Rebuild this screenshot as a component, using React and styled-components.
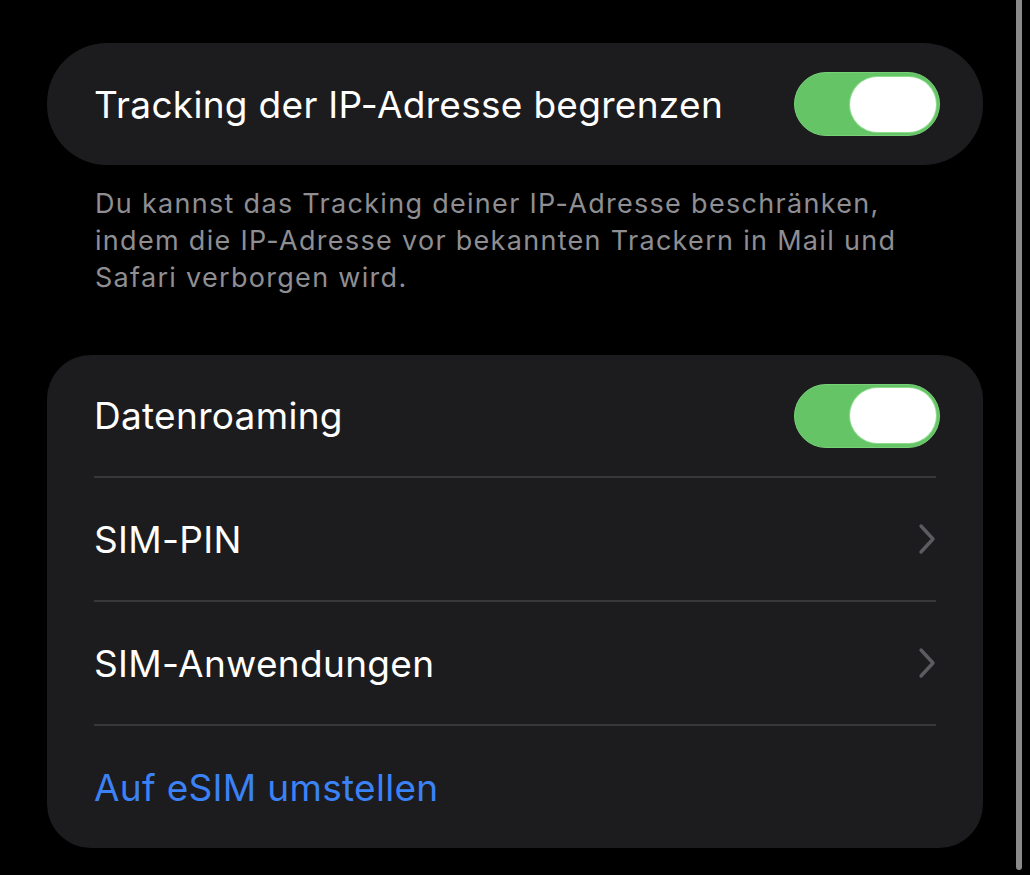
import React from 'react';
import styled, { createGlobalStyle } from 'styled-components';

const GlobalStyle = createGlobalStyle`
  html, body {
    margin: 0;
    padding: 0;
    background: #000;
  }
  body {
    font-family: Inter, "Noto Sans", "Liberation Sans", sans-serif;
    -webkit-font-smoothing: antialiased;
  }
`;

const Page = styled.div`
  display: flex;
  width: 1030px;
  height: 875px;
  background: #000;
  overflow: hidden;
`;

const Content = styled.div`
  display: flex;
  flex-direction: column;
  width: 936px;
  margin-left: 47px;
  padding-top: 43px;
`;

const ScrollBar = styled.div`
  width: 6px;
  height: 870px;
  margin-left: 33px;
  background: #8a8a8a;
  border-radius: 0 0 3px 3px;
`;

const Card = styled.div`
  background: #1c1c1e;
  border-radius: ${(p) => p.$radius}px;
  overflow: hidden;
`;

const Row = styled.div`
  display: flex;
  align-items: center;
  justify-content: space-between;
  height: ${(p) => p.$height || 124}px;
  margin: 0 47px;
  box-sizing: border-box;
  border-top: ${(p) => (p.$divider ? '2px solid #38383a' : 'none')};
`;

const Label = styled.span`
  font-size: 37px;
  letter-spacing: 0.3px;
  color: ${(p) => (p.$link ? '#3b82f6' : '#ffffff')};
`;

const Footnote = styled.p`
  margin: 0;
  padding: 20px 20px 0 48px;
  height: 190px;
  box-sizing: border-box;
  font-size: 27px;
  line-height: 37px;
  letter-spacing: 1.3px;
  color: #8e8e93;
`;

const Track = styled.div`
  display: flex;
  align-items: center;
  justify-content: flex-end;
  width: 146px;
  height: 64px;
  margin-right: -4px;
  padding: 0 3px;
  box-sizing: border-box;
  border-radius: 32px;
  background: #65c466;
  border: 1px solid #78d179;
`;

const Knob = styled.div`
  width: 86px;
  height: 55px;
  border-radius: 28px;
  background: #fff;
  box-shadow: 0 0 0 1px #8fdc8f;
`;

const Chevron = styled.svg`
  width: 24px;
  height: 34px;
`;

const Toggle = () => (
  <Track>
    <Knob />
  </Track>
);

const Arrow = () => (
  <Chevron viewBox="0 0 24 34">
    <path
      d="M9 4 L21 17 L9 30"
      fill="none"
      stroke="#5b5b60"
      strokeWidth="3.4"
      strokeLinecap="round"
      strokeLinejoin="round"
    />
  </Chevron>
);

export default function App() {
  return (
    <Page>
      <GlobalStyle />
      <Content>
        <Card $radius={60}>
          <Row $height={122}>
            <Label>Tracking der IP-Adresse begrenzen</Label>
            <Toggle />
          </Row>
        </Card>
        <Footnote>
          Du kannst das Tracking deiner IP-Adresse beschränken,
          <br />
          indem die IP-Adresse vor bekannten Trackern in Mail und
          <br />
          Safari verborgen wird.
        </Footnote>
        <Card $radius={44}>
          <Row $height={121}>
            <Label>Datenroaming</Label>
            <Toggle />
          </Row>
          <Row $divider>
            <Label>SIM-PIN</Label>
            <Arrow />
          </Row>
          <Row $divider>
            <Label>SIM-Anwendungen</Label>
            <Arrow />
          </Row>
          <Row $divider>
            <Label $link>Auf eSIM umstellen</Label>
          </Row>
        </Card>
      </Content>
      <ScrollBar />
    </Page>
  );
}
